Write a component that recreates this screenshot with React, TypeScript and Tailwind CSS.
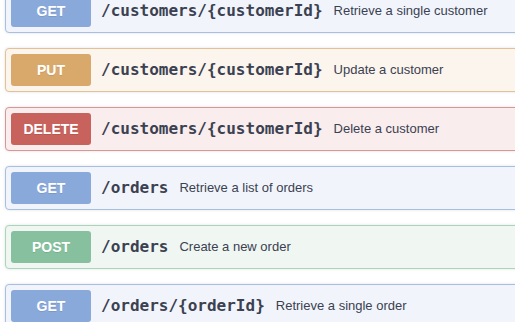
const ops = [
  { method: 'GET', path: '/customers/{customerId}', summary: 'Retrieve a single customer' },
  { method: 'PUT', path: '/customers/{customerId}', summary: 'Update a customer' },
  { method: 'DELETE', path: '/customers/{customerId}', summary: 'Delete a customer' },
  { method: 'GET', path: '/orders', summary: 'Retrieve a list of orders' },
  { method: 'POST', path: '/orders', summary: 'Create a new order' },
  { method: 'GET', path: '/orders/{orderId}', summary: 'Retrieve a single order' },
];

const styles: Record<string, { row: string; badge: string }> = {
  GET: { row: 'bg-[#f1f5fb] border-[#a8bfe4]', badge: 'bg-[#89a9da]' },
  PUT: { row: 'bg-[#fbf5ee] border-[#e2c294]', badge: 'bg-[#d9a96c]' },
  DELETE: { row: 'bg-[#f9eded] border-[#da9694]', badge: 'bg-[#c7625d]' },
  POST: { row: 'bg-[#f0f7f2] border-[#a9d5bb]', badge: 'bg-[#86c09f]' },
};

export default function App() {
  return (
    <div className="w-[515px] h-[322px] overflow-hidden bg-white">
      <div className="flex flex-col gap-[15px] -mt-[11px] pl-[5px] w-[560px]">
        {ops.map((op, i) => {
          const s = styles[op.method];
          return (
            <div
              key={i}
              className={`flex items-center border rounded-[4px] p-[5px] shadow-[0_0_3px_rgba(0,0,0,0.12)] ${s.row}`}
            >
              <span
                className={`w-[80px] h-[32px] shrink-0 flex items-center justify-center rounded-[3px] text-white text-[14px] font-bold [text-shadow:0_1px_0_rgba(0,0,0,0.1)] ${s.badge}`}
                style={{ fontFamily: '"Liberation Sans", Arial, sans-serif' }}
              >
                {op.method}
              </span>
              <span
                className="pl-[10px] text-[16px] font-bold text-[#3b4151] whitespace-nowrap"
                style={{ fontFamily: '"DejaVu Sans Mono", monospace' }}
              >
                {op.path}
              </span>
              <span
                className="pl-[11px] text-[13px] text-[#3b4151] whitespace-nowrap"
                style={{ fontFamily: '"Liberation Sans", Arial, sans-serif' }}
              >
                {op.summary}
              </span>
            </div>
          );
        })}
      </div>
    </div>
  );
}
